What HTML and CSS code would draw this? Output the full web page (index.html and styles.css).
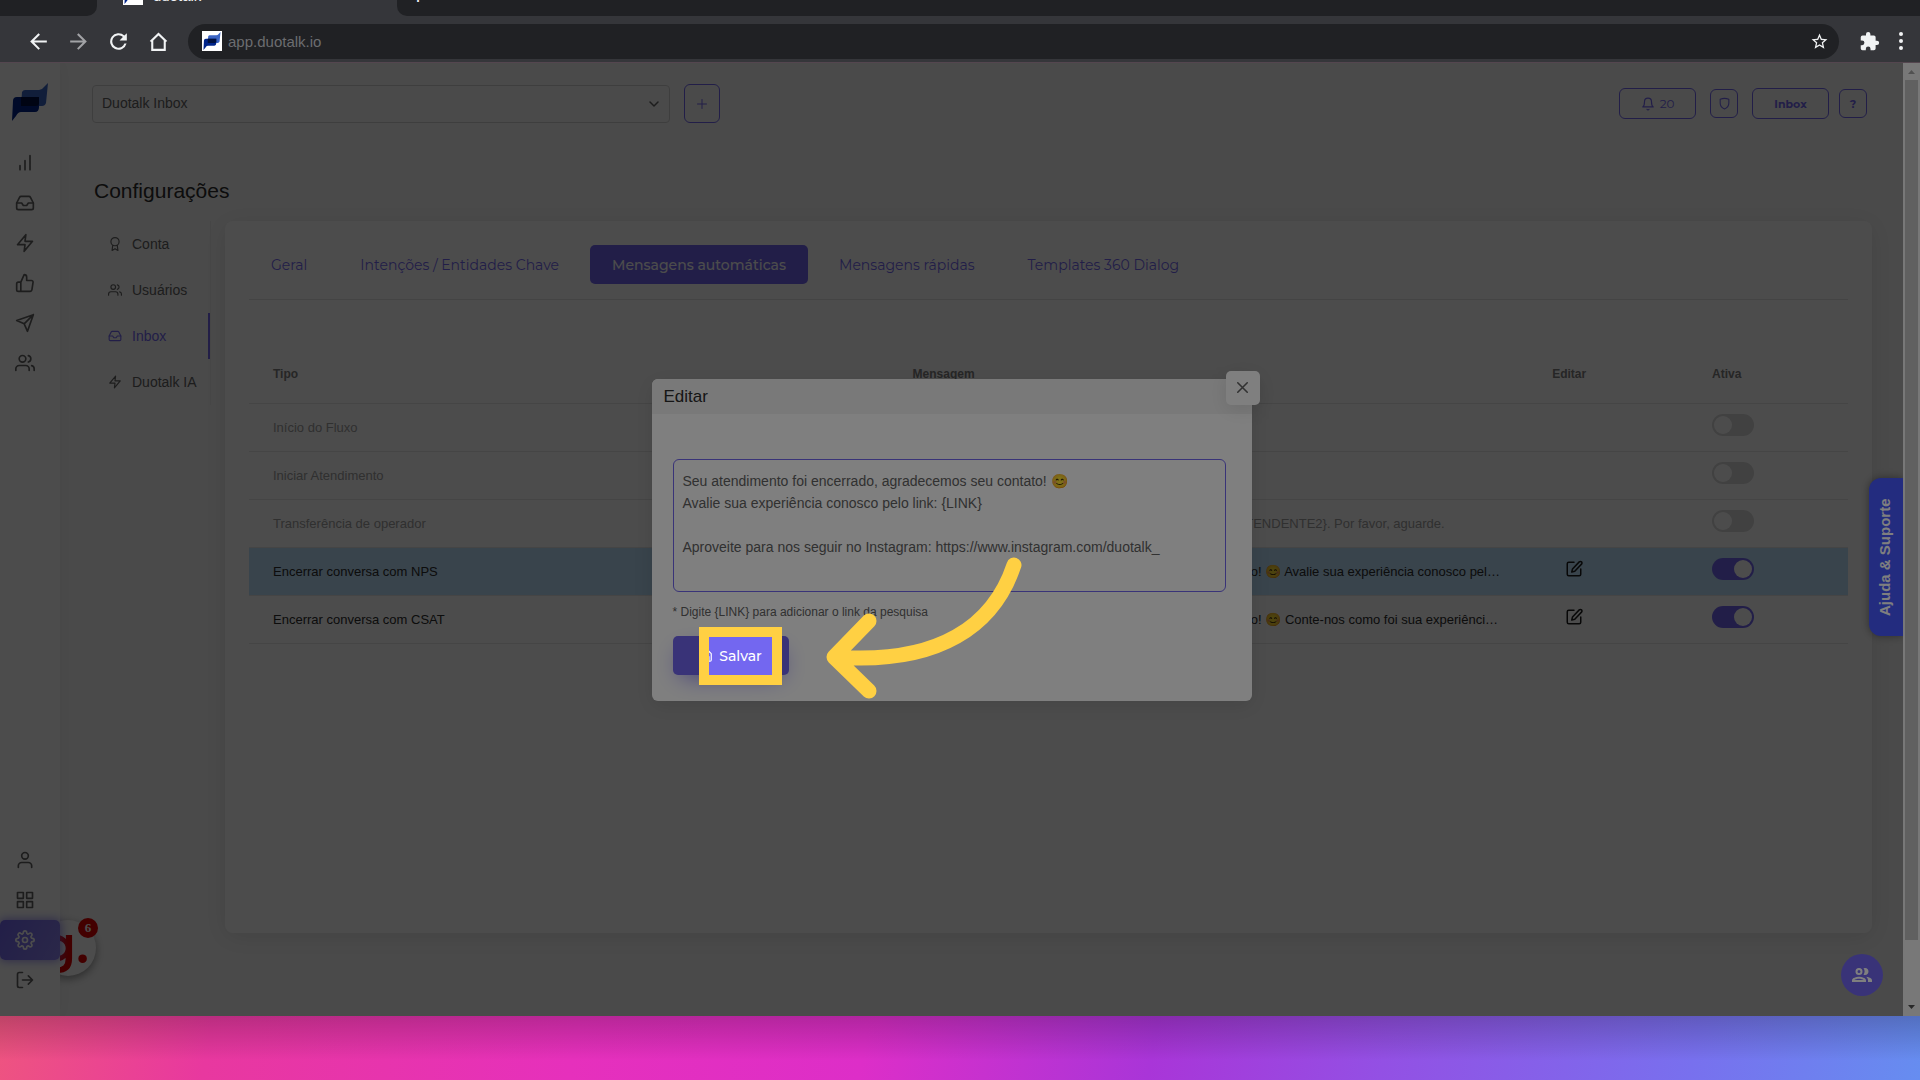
FILE: index.html
```
<!DOCTYPE html>
<html lang="pt-BR">
<head>
  <meta charset="UTF-8" />
  <meta name="viewport" content="width=device-width, initial-scale=1.0" />
  <title>Duotalk</title>
  <link rel="stylesheet" href="styles.css">
</head>
<body>
  <svg class="sprite" aria-hidden="true">
    <symbol id="logo" viewBox="0 0 36 38">
      <path d="M10 9q1-2 3-2h14q3 0 5-3l4-4-2 20q-1 3-4 3H9z" fill="#3b64c4"/>
      <path d="M1 18q0-4 4-4h22v10q0 5-4 5H9q-3 0-5 4l-4 5z" fill="#00248a"/>
      <path d="M9 14h18v6q0 3-3 3H9z" fill="#001040"/>
    </symbol>
    <symbol id="inbox" viewBox="0 0 24 24"><path d="M22 12h-6l-2 3h-4l-2-3H2"/><path d="M5.45 5.11 2 12v6a2 2 0 0 0 2 2h16a2 2 0 0 0 2-2v-6l-3.45-6.89A2 2 0 0 0 16.76 4H7.24a2 2 0 0 0-1.79 1.11z"/></symbol>
    <symbol id="zap" viewBox="0 0 24 24"><path d="M13 2 3 14h9l-1 8 10-12h-9z"/></symbol>
    <symbol id="users" viewBox="0 0 24 24"><path d="M17 21v-2a4 4 0 0 0-4-4H5a4 4 0 0 0-4 4v2"/><circle cx="9" cy="7" r="4"/><path d="M23 21v-2a4 4 0 0 0-3-3.87M16 3.13a4 4 0 0 1 0 7.75"/></symbol>
    <symbol id="edit" viewBox="0 0 24 24"><path d="M12 3H5a2 2 0 0 0-2 2v14a2 2 0 0 0 2 2h14a2 2 0 0 0 2-2v-7"/><path d="M19 2.5a2.1 2.1 0 0 1 3 3L13 15l-4 1 1-4z"/></symbol>
  </svg>

  <!-- Navegador -->
  <header class="browser">
    <div class="tabstrip">
      <div class="tab-left"></div>
      <div class="tab-active">
        <span class="favicon"><svg><use href="#logo"/></svg></span>
        <span>duotalk</span>
      </div>
      <div class="tab-right"><span>+</span></div>
    </div>
    <div class="toolbar">
      <button class="nav-btn" aria-label="Voltar"><svg viewBox="0 0 24 24"><path d="M20 11H7.8l5.6-5.6L12 4l-8 8 8 8 1.4-1.4L7.8 13H20z"/></svg></button>
      <button class="nav-btn dim" aria-label="Avançar"><svg viewBox="0 0 24 24"><path d="M4 13h12.2l-5.6 5.6L12 20l8-8-8-8-1.4 1.4 5.6 5.6H4z"/></svg></button>
      <button class="nav-btn" aria-label="Recarregar"><svg viewBox="0 0 24 24"><path d="M17.65 6.35A8 8 0 1 0 19.73 14h-2.08A6 6 0 1 1 12 6c1.66 0 3.14.69 4.22 1.78L13 11h7V4z"/></svg></button>
      <button class="nav-btn" aria-label="Início"><svg viewBox="0 0 24 24"><path d="M12 6.2l5 4.8v8H7v-8zM12 3.4L3.6 11.5l1.4 1V21h14v-8.5l1.4-1z" fill-rule="evenodd"/></svg></button>
      <div class="omnibox">
        <span class="favicon"><svg><use href="#logo"/></svg></span>
        <input type="text" value="app.duotalk.io" aria-label="Endereço">
        <button aria-label="Favoritar"><svg viewBox="0 0 24 24"><path d="M22 9.24l-7.19-.62L12 2 9.19 8.63 2 9.24l5.46 4.73L5.82 21 12 17.27 18.18 21l-1.63-7.03zM12 15.4l-3.76 2.27 1-4.28-3.32-2.88 4.38-.38L12 6.1l1.71 4.04 4.38.38-3.32 2.88 1 4.28z"/></svg></button>
      </div>
      <button class="ext" aria-label="Extensões"><svg viewBox="0 0 24 24"><path d="M20.5 11H19V7a2 2 0 0 0-2-2h-4V3.5a2.5 2.5 0 0 0-5 0V5H4a2 2 0 0 0-2 2v3.8h1.5a2.7 2.7 0 0 1 0 5.4H2V20a2 2 0 0 0 2 2h3.8v-1.5a2.7 2.7 0 0 1 5.4 0V22H17a2 2 0 0 0 2-2v-4h1.5a2.5 2.5 0 0 0 0-5z"/></svg></button>
      <button class="dots" aria-label="Menu"><svg viewBox="0 0 6 20"><circle cx="3" cy="3" r="2"/><circle cx="3" cy="10" r="2"/><circle cx="3" cy="17" r="2"/></svg></button>
    </div>
  </header>

  <div class="page">
    <nav class="sidebar">
      <a href="#" class="logo" aria-label="Duotalk"><svg><use href="#logo"/></svg></a>
      <a href="#" aria-label="Relatórios"><svg viewBox="0 0 24 24"><path d="M18 20V3M12 20V9M6 20v-5"/></svg></a>
      <a href="#" aria-label="Inbox"><svg><use href="#inbox"/></svg></a>
      <a href="#" aria-label="Automação"><svg><use href="#zap"/></svg></a>
      <a href="#" aria-label="Avaliações"><svg viewBox="0 0 24 24"><path d="M14 9V5a3 3 0 0 0-3-3l-4 9v11h11.28a2 2 0 0 0 2-1.7l1.38-9a2 2 0 0 0-2-2.3zM7 22H4a2 2 0 0 1-2-2v-7a2 2 0 0 1 2-2h3"/></svg></a>
      <a href="#" aria-label="Enviar"><svg viewBox="0 0 24 24"><path d="M22 2 11 13M22 2l-7 20-4-9-9-4z"/></svg></a>
      <a href="#" aria-label="Contatos"><svg><use href="#users"/></svg></a>
      <a href="#" class="push" aria-label="Perfil"><svg viewBox="0 0 24 24"><path d="M20 21v-2a4 4 0 0 0-4-4H8a4 4 0 0 0-4 4v2"/><circle cx="12" cy="7" r="4"/></svg></a>
      <a href="#" aria-label="Aplicativos"><svg viewBox="0 0 24 24"><path d="M3 3h7v7H3zM14 3h7v7h-7zM14 14h7v7h-7zM3 14h7v7H3z"/></svg></a>
      <a href="#" class="active" aria-label="Configurações"><svg viewBox="0 0 24 24"><circle cx="12" cy="12" r="3"/><path d="M19.4 15a1.65 1.65 0 0 0 .33 1.82l.06.06a2 2 0 1 1-2.83 2.83l-.06-.06a1.65 1.65 0 0 0-2.8 1.17V21a2 2 0 0 1-4 0v-.09a1.65 1.65 0 0 0-2.9-1.2l-.06.06a2 2 0 1 1-2.83-2.83l.06-.06A1.65 1.65 0 0 0 3.1 14H3a2 2 0 0 1 0-4h.09a1.65 1.65 0 0 0 1.2-2.9l-.06-.06a2 2 0 1 1 2.83-2.83l.06.06A1.65 1.65 0 0 0 10 3.1V3a2 2 0 0 1 4 0v.09a1.65 1.65 0 0 0 2.9 1.2l.06-.06a2 2 0 1 1 2.83 2.83l-.06.06A1.65 1.65 0 0 0 20.9 10H21a2 2 0 0 1 0 4h-.09a1.65 1.65 0 0 0-1.51 1z"/></svg></a>
      <a href="#" aria-label="Sair"><svg viewBox="0 0 24 24"><path d="M9 21H5a2 2 0 0 1-2-2V5a2 2 0 0 1 2-2h4M16 17l5-5-5-5M21 12H9"/></svg></a>
    </nav>

    <main class="main">
      <div class="topbar">
        <div class="select">
          <select aria-label="Inbox selecionada"><option>Duotalk Inbox</option></select>
          <svg viewBox="0 0 24 24"><path d="M4 8l8 8 8-8"/></svg>
        </div>
        <button class="outline add" aria-label="Adicionar"><svg viewBox="0 0 24 24"><path d="M12 3v18M3 12h18"/></svg></button>
        <div class="actions">
          <button class="outline wide"><svg viewBox="0 0 24 24"><path d="M18 8A6 6 0 0 0 6 8c0 7-3 9-3 9h18s-3-2-3-9M13.73 21a2 2 0 0 1-3.46 0"/></svg>20</button>
          <button class="outline square" aria-label="Segurança"><svg viewBox="0 0 24 24"><path d="M12 22c-5-2-8-6-8-11V4q8-3 16 0v7c0 5-3 9-8 11z"/></svg></button>
          <button class="outline wide bold">Inbox</button>
          <button class="outline square bold help">?</button>
        </div>
      </div>

      <h1>Configurações</h1>

      <div class="settings">
        <nav class="menu">
          <a href="#"><svg viewBox="0 0 24 24"><circle cx="12" cy="8" r="7"/><path d="M8.2 13.9 7 23l5-3 5 3-1.2-9.1"/></svg>Conta</a>
          <a href="#"><svg><use href="#users"/></svg>Usuários</a>
          <a href="#" class="active"><svg><use href="#inbox"/></svg>Inbox</a>
          <a href="#"><svg><use href="#zap"/></svg>Duotalk IA</a>
        </nav>

        <section class="card">
          <div class="tabs">
            <button>Geral</button>
            <button>Intenções / Entidades Chave</button>
            <button class="active">Mensagens automáticas</button>
            <button>Mensagens rápidas</button>
            <button>Templates 360 Dialog</button>
          </div>
          <table>
            <thead>
              <tr><th class="col-text">Tipo</th><th class="col-text">Mensagem</th><th>Editar</th><th>Ativa</th></tr>
            </thead>
            <tbody>
              <tr class="off">
                <td>Início do Fluxo</td><td></td><td></td>
                <td class="ctrl"><input type="checkbox" class="switch" aria-label="Início do Fluxo"></td>
              </tr>
              <tr class="off">
                <td>Iniciar Atendimento</td><td></td><td></td>
                <td class="ctrl"><input type="checkbox" class="switch" aria-label="Iniciar Atendimento"></td>
              </tr>
              <tr class="off">
                <td>Transferência de operador</td>
                <td>Você está sendo transferido de {ATENDENTE1} para o {ATENDENTE2}. Por favor, aguarde.</td><td></td>
                <td class="ctrl"><input type="checkbox" class="switch" aria-label="Transferência de operador"></td>
              </tr>
              <tr class="selected">
                <td>Encerrar conversa com NPS</td>
                <td>Seu atendimento foi encerrado, agradecemos o seu contato! 😊 Avalie sua experiência conosco pelo link: {LINK}</td>
                <td class="ctrl"><button class="edit" aria-label="Editar NPS"><svg><use href="#edit"/></svg></button></td>
                <td class="ctrl"><input type="checkbox" class="switch" aria-label="Encerrar conversa com NPS" checked></td>
              </tr>
              <tr>
                <td>Encerrar conversa com CSAT</td>
                <td>Seu atendimento foi encerrado, agradecemos o seu contato! 😊 Conte-nos como foi sua experiência pelo link: {LINK}</td>
                <td class="ctrl"><button class="edit" aria-label="Editar CSAT"><svg><use href="#edit"/></svg></button></td>
                <td class="ctrl"><input type="checkbox" class="switch" aria-label="Encerrar conversa com CSAT" checked></td>
              </tr>
            </tbody>
          </table>
        </section>
      </div>
    </main>

    <div class="widget"><div class="widget-face">g.</div><span class="badge">6</span></div>
    <div class="backdrop"></div>
    <button class="support">Ajuda &amp; Suporte</button>
    <button class="fab" aria-label="Equipe"><svg viewBox="0 0 24 24"><path d="M9 13.75c-2.34 0-7 1.17-7 3.5V19h14v-1.75c0-2.33-4.66-3.5-7-3.5zM4.34 17c.84-.58 2.87-1.25 4.66-1.25s3.82.67 4.66 1.25zM9 12a3.5 3.5 0 1 0 0-7 3.5 3.5 0 0 0 0 7zm0-5a1.5 1.5 0 1 1 0 3 1.5 1.5 0 0 1 0-3zm7.04 6.81c1.16.84 1.96 1.96 1.96 3.44V19h4v-1.75c0-2.02-3.5-3.17-5.96-3.44zM15 12a3.5 3.5 0 1 0-1.5-6.66 5.48 5.48 0 0 1 0 6.32c.46.22.97.34 1.5.34z"/></svg></button>
    <div class="scrollbar">
      <svg viewBox="0 0 17 17"><path d="M5 11h7L8.5 7z" fill="#a3a3a3"/></svg>
      <div class="thumb"></div>
      <svg viewBox="0 0 17 17"><path d="M5 6h7l-3.5 4z" fill="#505050"/></svg>
    </div>

    <div class="modal-layer">
      <div class="modal" role="dialog" aria-labelledby="modal-title">
        <button class="close" aria-label="Fechar"><svg viewBox="0 0 24 24"><path d="M18 6 6 18M6 6l12 12"/></svg></button>
        <h2 id="modal-title">Editar</h2>
        <div class="modal-body">
          <textarea aria-label="Mensagem">Seu atendimento foi encerrado, agradecemos seu contato! 😊
Avalie sua experiência conosco pelo link: {LINK}

Aproveite para nos seguir no Instagram: https://www.instagram.com/duotalk_</textarea>
          <p>* Digite {LINK} para adicionar o link da pesquisa</p>
          <div class="save-wrap">
            <button class="save"><svg viewBox="0 0 24 24"><path d="M19 21H5a2 2 0 0 1-2-2V5a2 2 0 0 1 2-2h11l5 5v11a2 2 0 0 1-2 2zM17 21v-8H7v8M7 3v5h8"/></svg>Salvar</button>
            <div class="spotlight"></div>
          </div>
        </div>
        <svg class="arrow" viewBox="820 550 210 160"><path d="M1014 565C994 625 940 665 835 657M869 621L834 657L869 691"/></svg>
      </div>
    </div>
  </div>

  <footer class="backdrop-strip"></footer>
</body>
</html>
```
FILE: styles.css
```
* { box-sizing: border-box; }
body {
  margin: 0;
  height: 100vh;
  display: flex;
  flex-direction: column;
  overflow: hidden;
  font-family: "Liberation Sans", Arial, sans-serif;
  font-size: 14px;
  color: #626262;
}
button, input, select, textarea {
  font: inherit;
  color: inherit;
}
button {
  padding: 0;
  border: 0;
  background: none;
  display: flex;
  align-items: center;
  justify-content: center;
}
a { color: inherit; text-decoration: none; }
svg {
  fill: none;
  stroke: currentColor;
  stroke-width: 2;
  stroke-linecap: round;
  stroke-linejoin: round;
  flex: none;
}
.sprite { position: absolute; width: 0; height: 0; }

/* navegador */
.browser {
  flex: none;
  background: #35363a;
  color: #f1f3f4;
  border-bottom: 1px solid #54464f;
}
.browser svg { fill: currentColor; stroke: none; }
.tabstrip {
  display: flex;
  align-items: flex-end;
  height: 16px;
  overflow: hidden;
}
.tab-left {
  width: 97px;
  height: 38px;
  background: #202124;
  border-bottom-right-radius: 10px;
}
.tab-active {
  width: 300px;
  height: 38px;
  padding: 0 26px 4px;
  display: flex;
  align-items: center;
  gap: 10px;
  font-size: 15px;
}
.tab-right {
  flex: 1;
  height: 38px;
  padding: 0 14px 2px;
  display: flex;
  align-items: center;
  background: #202124;
  border-bottom-left-radius: 10px;
  font-size: 24px;
}
.favicon {
  display: flex;
  align-items: center;
  justify-content: center;
  width: 20px;
  height: 20px;
  background: #fff;
}
.favicon svg { width: 18px; height: 18px; }
.toolbar {
  height: 46px;
  display: flex;
  align-items: center;
  padding: 4px 16px 0 18px;
}
.nav-btn { width: 40px; height: 40px; }
.nav-btn svg { width: 25px; height: 25px; }
.nav-btn.dim { color: #a2a3a6; }
.omnibox {
  flex: 1;
  height: 35px;
  margin-left: 10px;
  padding: 0 10px 0 14px;
  display: flex;
  align-items: center;
  gap: 6px;
  border-radius: 18px;
  background: #202124;
}
.omnibox input {
  flex: 1;
  padding: 0;
  border: 0;
  outline: 0;
  background: none;
  color: #6c6d70;
  font-size: 15px;
}
.omnibox button svg { width: 19px; height: 19px; }
.ext { margin-left: 20px; }
.ext svg { width: 21px; height: 21px; }
.dots { margin-left: 18px; }
.dots svg { width: 6px; height: 20px; }

/* aplicativo */
.page {
  position: relative;
  flex: 1;
  min-height: 0;
  display: flex;
  padding-right: 17px;
  overflow: hidden;
  background: #f8f8f8;
}
.sidebar {
  position: relative;
  z-index: 3;
  width: 60px;
  padding-bottom: 16px;
  display: flex;
  flex-direction: column;
  background: #fff;
  box-shadow: 0 0 15px rgba(0, 0, 0, .06);
}
.sidebar a {
  height: 40px;
  padding-left: 15px;
  display: flex;
  align-items: center;
}
.sidebar svg { width: 20px; height: 20px; }
.sidebar .logo { height: 80px; padding: 0 0 2px 12px; }
.sidebar .logo svg { width: 36px; height: 38px; stroke: none; }
.sidebar .push { margin-top: auto; }
.sidebar .active {
  color: #fff;
  border-radius: 5px;
  background: linear-gradient(118deg, #7367f0, #8f85f3);
  box-shadow: 0 0 10px 1px rgba(115, 103, 240, .7);
}
.main {
  flex: 1;
  min-width: 0;
  display: flex;
  flex-direction: column;
  padding: 21px 31px 83px 32px;
}
.topbar {
  display: flex;
  align-items: center;
  gap: 14px;
  padding-right: 5px;
}
.select {
  position: relative;
  width: 578px;
}
.select select {
  width: 100%;
  height: 38px;
  padding: 0 9px 1px;
  appearance: none;
  border: 1px solid #d0d0d0;
  border-radius: 4px;
  background: #f8f8f8;
}
.select svg {
  position: absolute;
  right: 10px;
  top: 13px;
  width: 12px;
  height: 12px;
  stroke-width: 3;
}
.outline {
  border: 1px solid #7367f0;
  border-radius: 6px;
  color: #7367f0;
  font-family: Montserrat, Inter, sans-serif;
  font-size: 12px;
}
.outline svg { width: 14px; height: 14px; }
.add { width: 36px; height: 39px; }
.add svg { width: 12px; height: 12px; }
.actions {
  margin-left: auto;
  display: flex;
  align-items: center;
  gap: 14px;
}
.wide { width: 77px; height: 31px; gap: 5px; }
.square { width: 28px; height: 29px; }
.square svg { width: 13px; height: 13px; }
.bold { font-size: 11px; font-weight: 700; }
.help { margin-left: -4px; }
h1 {
  margin: 54px 0 16px 2px;
  font-size: 21px;
  line-height: 28px;
  font-weight: 400;
  color: #2c2c2c;
}
.settings {
  flex: 1;
  display: flex;
  align-items: flex-start;
  gap: 14px;
}
.menu {
  width: 119px;
  border-right: 1px solid #ececec;
}
.menu a {
  height: 46px;
  padding-left: 16px;
  display: flex;
  align-items: center;
  gap: 10px;
}
.menu svg { width: 14px; height: 14px; }
.menu .active {
  color: #7367f0;
  border-right: 2px solid #7367f0;
}
.card {
  flex: 1;
  min-width: 0;
  align-self: stretch;
  padding: 24px;
  border-radius: 8px;
  background: #fff;
  box-shadow: 0 4px 25px rgba(0, 0, 0, .1);
}
.tabs {
  display: flex;
  gap: 9px;
  padding-bottom: 15px;
  border-bottom: 1px solid #e4e4e4;
}
.tabs button {
  height: 39px;
  padding: 0 22px;
  border-radius: 5px;
  color: #7367f0;
  font-family: Montserrat, Inter, sans-serif;
  font-size: 14px;
}
.tabs .active {
  color: #fff;
  background: #7367f0;
  font-weight: 500;
}
table {
  width: 100%;
  margin-top: 44px;
  table-layout: fixed;
  border-spacing: 0;
  font-size: 13px;
}
th, td {
  height: 48px;
  padding: 0 24px;
  border-bottom: 1px solid #e8e8e8;
  text-align: left;
  white-space: nowrap;
  overflow: hidden;
  text-overflow: ellipsis;
  color: #2c2c2c;
}
th {
  height: 60px;
  font-size: 12px;
  color: #808080;
}
.col-text { width: 40%; }
.off td { color: #a0a0a0; }
.selected td { background: #bee3fd; }
.ctrl { padding-bottom: 5px; }
.edit { width: 44px; color: #1c1c1c; }
.edit svg { width: 18px; height: 18px; }
.switch {
  display: block;
  appearance: none;
  width: 42px;
  height: 22px;
  margin: 0;
  padding: 2px;
  border-radius: 11px;
  background: #dadada;
}
.switch::before {
  content: "";
  display: block;
  width: 18px;
  height: 18px;
  border-radius: 50%;
  background: #fff;
}
.switch:checked { background: #7367f0; }
.switch:checked::before { margin-left: auto; }

/* elementos flutuantes */
.widget {
  position: absolute;
  z-index: 2;
  left: 40px;
  bottom: 40px;
}
.widget-face {
  width: 56px;
  height: 56px;
  padding-right: 7px;
  border-radius: 50%;
  background: #fff;
  box-shadow: 0 3px 8px rgba(0, 0, 0, .4);
  color: #e00000;
  font-family: Montserrat, Inter, sans-serif;
  font-size: 52px;
  line-height: 50px;
  font-weight: 600;
  text-align: right;
}
.badge {
  position: absolute;
  right: -2px;
  top: -2px;
  width: 20px;
  height: 20px;
  border-radius: 50%;
  background: #e00000;
  color: #fff;
  font: bold 13px/20px "Liberation Serif", serif;
  text-align: center;
}
.backdrop {
  position: absolute;
  z-index: 10;
  inset: 0;
  background: rgba(0, 0, 0, .4);
}
.support {
  position: absolute;
  z-index: 11;
  right: 17px;
  top: 415px;
  width: 34px;
  height: 158px;
  padding-left: 3px;
  writing-mode: vertical-rl;
  transform: rotate(180deg);
  border-radius: 0 12px 12px 0;
  background: #4658ff;
  box-shadow: 0 0 8px rgba(0, 0, 0, .4);
  color: #fff;
  font-size: 15px;
  font-weight: 700;
}
.fab {
  position: absolute;
  z-index: 11;
  right: 37px;
  bottom: 20px;
  width: 42px;
  height: 42px;
  border-radius: 50%;
  background: #7367f0;
  color: #fff;
}
.fab svg { width: 24px; height: 24px; fill: currentColor; stroke: none; }
.scrollbar {
  position: absolute;
  z-index: 11;
  right: 0;
  top: 0;
  bottom: 0;
  width: 17px;
  display: flex;
  flex-direction: column;
  background: #f1f1f1;
}
.scrollbar svg { height: 17px; stroke: none; }
.thumb {
  height: 860px;
  margin: 0 2px auto;
  background: #c1c1c1;
}

/* modal */
.modal-layer {
  position: absolute;
  z-index: 12;
  inset: 0 17px 0 0;
  display: flex;
  align-items: center;
  justify-content: center;
}
.modal {
  position: relative;
  width: 600px;
  border-radius: 6px;
  background: #fff;
  box-shadow: 0 5px 20px rgba(0, 0, 0, .1);
}
.modal h2 {
  margin: 0;
  padding: 0 12px;
  border-radius: 6px 6px 0 0;
  background: #f3f3f3;
  color: #2c2c2c;
  font-size: 17px;
  line-height: 35px;
  font-weight: 400;
}
.close {
  position: absolute;
  z-index: 1;
  right: -8px;
  top: -8px;
  width: 34px;
  height: 34px;
  border-radius: 5px;
  background: #fff;
  box-shadow: 0 5px 20px rgba(0, 0, 0, .1);
}
.close svg { width: 19px; height: 19px; }
.modal-body { padding: 45px 26px 26px 21px; }
.modal textarea {
  display: block;
  width: 100%;
  height: 133px;
  padding: 10px 9px;
  resize: none;
  outline: 0;
  border: 1px solid #7367f0;
  border-radius: 6px;
  background: #fff;
  line-height: 22px;
}
.modal p {
  margin: 11px 0 15px;
  font-size: 12px;
  line-height: 18px;
}
.save-wrap {
  position: relative;
  z-index: 3;
  width: 116px;
}
.save {
  width: 116px;
  height: 39px;
  padding-top: 2px;
  gap: 6px;
  border-radius: 5px;
  background: #7367f0;
  box-shadow: 0 8px 25px -8px #7367f0;
  color: #fff;
  font-family: Montserrat, Inter, sans-serif;
  font-weight: 500;
}
.save svg { width: 14px; height: 14px; }
/* tudo fora da moldura fica escurecido */
.spotlight {
  position: absolute;
  left: 26px;
  top: -9px;
  width: 83px;
  height: 58px;
  border: 10px solid #ffd043;
  box-shadow: 0 0 0 2000px rgba(0, 0, 0, .5);
}
.arrow {
  position: absolute;
  z-index: 4;
  left: 168px;
  top: 171px;
  width: 210px;
  height: 160px;
  stroke: #ffd043;
  stroke-width: 15;
}

.backdrop-strip {
  flex: none;
  height: 64px;
  background:
    linear-gradient(rgba(0, 0, 0, .2), rgba(0, 0, 0, 0) 70%),
    linear-gradient(100deg, #ee5480 0%, #e8389f 11%, #e630bc 30%, #dd2ec8 45%, #a935d8 60%, #9350e4 72%, #7870ee 88%, #668df0 100%);
}
```
